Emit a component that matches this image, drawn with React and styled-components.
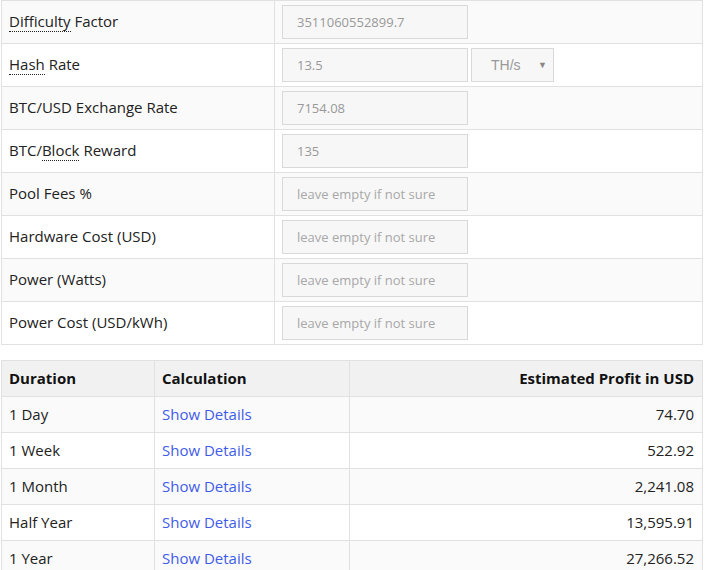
import React from 'react'
import styled, {createGlobalStyle} from 'styled-components'

const Global = createGlobalStyle`
  body {
    margin: 0;
    background: #fff;
    font-family: "Open Sans", "Liberation Sans", sans-serif;
    color: #222;
  }
`

const Page = styled.div`
  width: 702px;
  padding: 0 3px 0 1px;
`

const Table = styled.table`
  width: 100%;
  border-collapse: collapse;
  font-size: 15px;
  margin-bottom: ${props => props.gap || 0}px;
`

const Row = styled.tr`
  background: ${props => props.striped ? '#fafafa' : '#fff'};
`

const Label = styled.td`
  width: 258px;
  height: 40px;
  padding: 0 7px 2px;
  border: 1px solid #e1e1e1;
  vertical-align: middle;
`

const Field = styled.td`
  padding: 0 7px;
  border: 1px solid #e1e1e1;
  vertical-align: middle;
`

const Abbr = styled.span`
  border-bottom: 1px dotted #222;
`

const Inputs = styled.div`
  display: flex;
  gap: 3px;
`

const Input = styled.input`
  box-sizing: border-box;
  width: 186px;
  height: 34px;
  padding: 0 14px;
  border: 1px solid #d9d9d9;
  background: #f7f7f7;
  color: #999;
  font-family: "Open Sans", sans-serif;
  font-size: 13px;
  outline: none;
  &::placeholder { color: #a8a8a8; }
`

const Select = styled.div`
  box-sizing: border-box;
  width: 83px;
  height: 34px;
  border: 1px solid #d9d9d9;
  background: #f7f7f7;
  color: #999;
  font-family: "Liberation Sans", Arial, sans-serif;
  font-size: 14px;
  display: flex;
  align-items: center;
  justify-content: space-between;
  padding: 0 6px 0 19px;
  &::after {
    content: '▼';
    font-size: 9px;
    color: #888;
  }
`

const Th = styled.th`
  height: 33px;
  padding: 0 ${props => props.right ? 8 : 7}px 2px 7px;
  background: #f1f1f1;
  border: 1px solid #e1e1e1;
  font-weight: 700;
  text-align: ${props => props.right ? 'right' : 'left'};
  color: #111;
`

const Td = styled.td`
  height: 33px;
  padding: 0 ${props => props.right ? 8 : 7}px 2px 7px;
  border: 1px solid #e1e1e1;
  text-align: ${props => props.right ? 'right' : 'left'};
`

const Link = styled.a`
  color: #3f5ce8;
  text-decoration: none;
`

const fields = [
  {label: <><Abbr>Difficulty</Abbr> Factor</>, value: '3511060552899.7'},
  {label: <><Abbr>Hash</Abbr> Rate</>, value: '13.5', unit: 'TH/s'},
  {label: 'BTC/USD Exchange Rate', value: '7154.08'},
  {label: <>BTC/<Abbr>Block</Abbr> Reward</>, value: '135'},
  {label: 'Pool Fees %'},
  {label: 'Hardware Cost (USD)'},
  {label: 'Power (Watts)'},
  {label: 'Power Cost (USD/kWh)'},
]

const results = [
  ['1 Day', '74.70'],
  ['1 Week', '522.92'],
  ['1 Month', '2,241.08'],
  ['Half Year', '13,595.91'],
  ['1 Year', '27,266.52'],
]

export default function App() {
  return (
    <Page>
      <Global />
      <Table gap={15}>
        <tbody>
          {fields.map((f, i) => (
            <Row key={i} striped={i % 2 === 0}>
              <Label>{f.label}</Label>
              <Field>
                <Inputs>
                  <Input readOnly defaultValue={f.value} placeholder="leave empty if not sure" />
                  {f.unit && <Select>{f.unit}</Select>}
                </Inputs>
              </Field>
            </Row>
          ))}
        </tbody>
      </Table>
      <Table>
        <thead>
          <tr>
            <Th style={{width: 138}}>Duration</Th>
            <Th style={{width: 180}}>Calculation</Th>
            <Th right>Estimated Profit in USD</Th>
          </tr>
        </thead>
        <tbody>
          {results.map(([d, v], i) => (
            <Row key={d} striped={i % 2 === 0}>
              <Td>{d}</Td>
              <Td><Link href="#">Show Details</Link></Td>
              <Td right>{v}</Td>
            </Row>
          ))}
        </tbody>
      </Table>
    </Page>
  )
}
